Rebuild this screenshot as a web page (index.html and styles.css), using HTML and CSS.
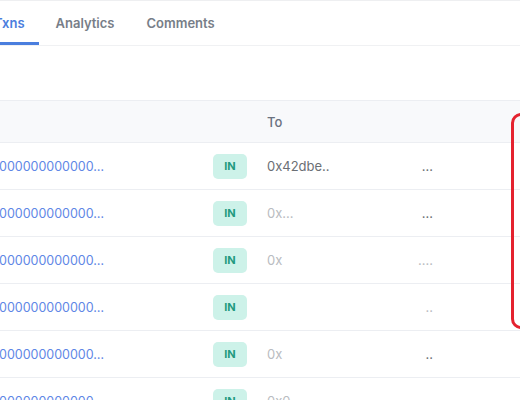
FILE: index.html
```html
<!DOCTYPE html>
<html>
<head>
<meta charset="utf-8">
<link rel="stylesheet" href="styles.css">
</head>
<body>
<div class="page">
  <nav class="tabs">
    <div class="tab active">Txns</div>
    <div class="tab">Analytics</div>
    <div class="tab">Comments</div>
  </nav>
  <div class="spacer"></div>
  <div class="table">
    <div class="row head">
      <div class="cell hash"></div>
      <div class="cell dir"></div>
      <div class="cell to">To</div>
    </div>
    <div class="row">
      <div class="cell hash">000000000000…</div>
      <div class="cell dir"><span class="badge">IN</span></div>
      <div class="cell to"><span>0x42dbe..</span><span class="tail">…</span></div>
    </div>
    <div class="row">
      <div class="cell hash">000000000000…</div>
      <div class="cell dir"><span class="badge">IN</span></div>
      <div class="cell to"><span class="faint">0x...</span><span class="tail">…</span></div>
    </div>
    <div class="row">
      <div class="cell hash">000000000000…</div>
      <div class="cell dir"><span class="badge">IN</span></div>
      <div class="cell to"><span class="faint">0x</span><span class="tail faint">.…</span></div>
    </div>
    <div class="row">
      <div class="cell hash">000000000000…</div>
      <div class="cell dir"><span class="badge">IN</span></div>
      <div class="cell to"><span class="faint"></span><span class="tail faint">..</span></div>
    </div>
    <div class="row">
      <div class="cell hash">000000000000…</div>
      <div class="cell dir"><span class="badge">IN</span></div>
      <div class="cell to"><span class="faint">0x</span><span class="tail">..</span></div>
    </div>
    <div class="row">
      <div class="cell hash">000000000000…</div>
      <div class="cell dir"><span class="badge">IN</span></div>
      <div class="cell to"><span class="faint">0x0</span><span class="tail faint">…</span></div>
    </div>
  </div>
  <div class="highlight"></div>
</div>
</body>
</html>
```

FILE: styles.css
```css
html, body {
  margin: 0;
  padding: 0;
  background: #ffffff;
  overflow: hidden;
}

body {
  font-family: Inter, "Noto Sans", sans-serif;
  color: #4b5563;
}

.page {
  position: relative;
  width: 520px;
  height: 400px;
  border-top: 1px solid #eeeff1;
  box-sizing: border-box;
  overflow: hidden;
}

.tabs {
  display: flex;
  height: 44px;
  border-bottom: 1px solid #f0f1f3;
  margin-left: -6px;
}

.tab {
  display: flex;
  align-items: center;
  padding: 0 17px;
  font-size: 13px;
  font-weight: 600;
  color: #777e88;
  box-sizing: border-box;
}

.tab.active {
  padding-left: 0;
  padding-right: 14px;
  color: #4a7ede;
  box-shadow: inset 0 -3px 0 #4a7ede;
}

.tab:last-child {
  padding-left: 15px;
}

.spacer {
  height: 54px;
}

.table {
  border-top: 1px solid #eceef2;
}

.row {
  display: grid;
  grid-template-columns: 213px 54px 1fr;
  height: 46px;
  border-bottom: 1px solid #eceef2;
  align-items: center;
  font-size: 13px;
}

.row.head {
  height: 41px;
  background: #f8f9fb;
}

.cell.hash {
  color: #5f87e6;
  font-size: 12.5px;
  margin-left: -1px;
}

.head .cell.to {
  color: #6b7280;
  font-weight: 500;
}

.badge {
  display: inline-flex;
  align-items: center;
  justify-content: center;
  width: 34px;
  height: 25px;
  border-radius: 5px;
  background: #cdf2e9;
  color: #1f9a7e;
  font-size: 11px;
  font-weight: 700;
}

.cell.to {
  display: flex;
  justify-content: space-between;
  width: 166px;
  color: #6b6f75;
}

.faint {
  color: #b9bcc1;
}

.highlight {
  position: absolute;
  left: 511px;
  top: 112px;
  width: 40px;
  height: 210px;
  border: 3px solid #e4222f;
  border-radius: 10px;
}
```
